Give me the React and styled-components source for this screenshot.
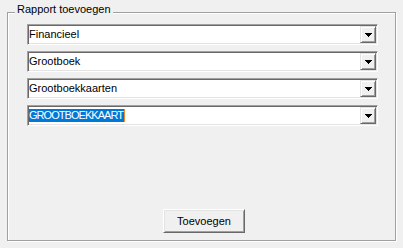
import styled, { createGlobalStyle } from "styled-components";

const GlobalStyle = createGlobalStyle`
  body {
    margin: 0;
    background: #f0f0f0;
    font-family: "Liberation Sans", Arial, sans-serif;
    font-size: 11px;
  }
`;

const Window = styled.div`
  width: 403px;
  height: 248px;
  box-sizing: border-box;
  padding: 12px 7px 7px 7px;
  background: #f0f0f0;
  display: flex;
`;

const GroupBox = styled.div`
  position: relative;
  flex: 1;
  border: 1px solid #a0a0a0;
  box-shadow: inset 1px 1px 0 #ffffff, 1px 1px 0 #ffffff;
  padding: 11px 0 7px 19px;
  display: flex;
  flex-direction: column;
  gap: 6px;
`;

const Legend = styled.span`
  position: absolute;
  top: -10px;
  left: 7px;
  padding: 0 2px;
  height: 13px;
  line-height: 13px;
  background: #f0f0f0;
  color: #000;
`;

const Combo = styled.div`
  width: 351px;
  height: 21px;
  box-sizing: border-box;
  padding: 1px;
  border: 1px solid;
  border-color: #a0a0a0 #ffffff #ffffff #a0a0a0;
  box-shadow: inset 1px 1px 0 #696969, inset -1px -1px 0 #e3e3e3;
  background: #ffffff;
  display: flex;
  align-items: flex-start;
`;

const Value = styled.div`
  flex: 1;
  display: flex;
  padding-top: 2px;
  line-height: 13px;
  color: #000;
`;

const Text = styled.span`
  padding: 0 1px 0 0;
  background: ${(p) => (p.$selected ? "#0078d7" : "transparent")};
  color: ${(p) => (p.$selected ? "#ffffff" : "#000000")};
  letter-spacing: ${(p) => (p.$selected ? "-0.95px" : "0")};
  border-right: ${(p) => (p.$selected ? "1px solid #f08a24" : "none")};
`;

const DropButton = styled.div`
  width: 16px;
  height: 17px;
  box-sizing: border-box;
  border: 1px solid;
  border-color: #e3e3e3 #696969 #696969 #e3e3e3;
  box-shadow: inset 1px 1px 0 #ffffff, inset -1px -1px 0 #a0a0a0;
  background: #f0f0f0;
  display: flex;
  align-items: center;
  justify-content: center;
`;

const Button = styled.button`
  margin-top: auto;
  margin-left: 136px;
  width: 82px;
  height: 24px;
  box-sizing: border-box;
  border: 1px solid;
  border-color: #ffffff #696969 #696969 #ffffff;
  box-shadow: inset 1px 1px 0 #e3e3e3, inset -1px -1px 0 #a0a0a0;
  background: #f0f0f0;
  font-family: "Liberation Sans", Arial, sans-serif;
  font-size: 11px;
  color: #000;
  padding: 0;
`;

const Arrow = () => (
  <svg width="7" height="4" viewBox="0 0 7 4" shapeRendering="crispEdges">
    <rect x="0" y="0" width="7" height="1" fill="#000" />
    <rect x="1" y="1" width="5" height="1" fill="#000" />
    <rect x="2" y="2" width="3" height="1" fill="#000" />
    <rect x="3" y="3" width="1" height="1" fill="#000" />
  </svg>
);

const options = [
  { label: "Financieel" },
  { label: "Grootboek" },
  { label: "Grootboekkaarten" },
  { label: "GROOTBOEKKAART", selected: true },
];

const App = () => {
  return (
    <>
      <GlobalStyle />
      <Window>
        <GroupBox>
          <Legend>Rapport toevoegen</Legend>
          {options.map((o) => (
            <Combo key={o.label}>
              <Value>
                <Text $selected={o.selected}>{o.label}</Text>
              </Value>
              <DropButton>
                <Arrow />
              </DropButton>
            </Combo>
          ))}
          <Button>Toevoegen</Button>
        </GroupBox>
      </Window>
    </>
  );
};

export default App;
